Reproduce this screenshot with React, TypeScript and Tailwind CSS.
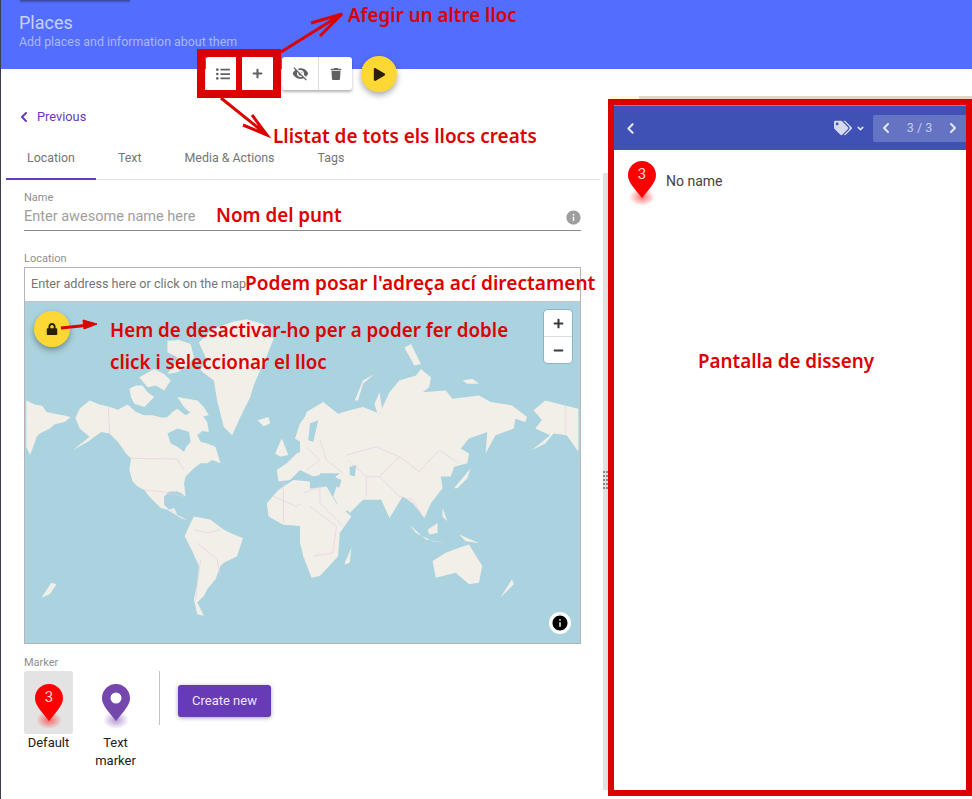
// Places editor screenshot with annotations
import { ChevronDown, ChevronLeft, ChevronRight } from 'lucide-react';
import { FaListUl, FaLock, FaMinus, FaPlay, FaPlus, FaTags, FaTrash } from 'react-icons/fa';
import { MdInfo, MdVisibilityOff } from 'react-icons/md';

const FONT = "font-['Roboto','Liberation_Sans',sans-serif]";
const NOTE = "absolute whitespace-nowrap font-['Noto_Sans',sans-serif] font-semibold text-[#dd0000] leading-none";

function Pin({ color, label, id }: { color: string; label?: string; id: string }) {
  return (
    <svg width="28" height="46" viewBox="0 0 28 46" className="block">
      <defs>
        <radialGradient id={id}>
          <stop offset="0%" stopColor={color} stopOpacity="0.55" />
          <stop offset="100%" stopColor={color} stopOpacity="0" />
        </radialGradient>
      </defs>
      <ellipse cx="14" cy="36" rx="13" ry="9" fill={`url(#${id})`} />
      <path d="M14 0C6.3 0 0 6.3 0 14c0 5 2.6 8.4 5.5 12.5L14 37l8.500-10.500C25.400 22.400 28 19 28 14 28 6.300 21.700 0 14 0z" fill={color} />
      {label ? (
        <text x="14" y="18" textAnchor="middle" fontSize="15" fill="#ffd6d6" fontFamily="Roboto">
          {label}
        </text>
      ) : (
        <circle cx="14" cy="14" r="5.500" fill="#fff" />
      )}
    </svg>
  );
}

// hand traced continents, coordinates are 3x page pixels
function WorldMap() {
  return (
    <svg viewBox="24 301 557 343" className="absolute inset-0 h-full w-full">
      <g transform="translate(20 300) scale(0.3333)" fill="#f2efe9" stroke="none">
        <path d="M14 300L40 312 62 316 75 335 100 340 125 345 148 350 130 365 100 372 85 385 55 400 45 410 35 440 25 465 14 440Z" />
        <path d="M162 352L175 325 205 300 235 312 262 318 290 328 320 312 345 335 370 345 395 345 425 352 440 350 455 335 470 325 495 345 520 330 545 345 560 365 565 395 545 392 530 405 540 425 560 430 585 440 600 490 575 480 560 490 540 490 520 505 495 530 490 550 492 565 495 590 482 580 470 575 445 575 430 590 430 615 445 630 460 625 470 645 500 662 480 655 455 640 440 630 420 625 400 605 385 590 370 570 350 560 335 545 325 510 330 475 315 460 305 445 290 425 265 400 240 395 220 410 200 425 155 450 180 430 205 410 175 385Z" />
        <path d="M440 400L470 385 490 390 505 395 510 425 497 440 490 455 470 440 450 430Z" fill="#aad3df" />
        <path d="M325 265L345 255 365 255 380 275 400 290 385 305 370 320 340 310 330 290Z" />
        <path d="M355 230L400 205 430 220 450 240 430 270 405 255 380 260Z" />
        <path d="M470 290L500 295 530 300 550 320 565 345 540 350 520 345 500 330 490 320Z" />
        <path d="M440 120L475 118 510 130 520 170 500 195 470 215 440 220 460 190 470 170 440 155Z" />
        <path d="M535 125L565 95 590 80 640 62 680 55 730 70 760 115 740 165 720 210 700 255 690 290 660 350 635 405 610 380 600 340 590 300 580 240 560 225 540 210 555 170Z" />
        <path d="M712 360L745 350 750 370 730 378Z" />
        <path d="M765 460L785 415 805 465 780 470Z" />
        <path d="M870 330L840 370 825 415 850 430 870 400Z" />
        <path d="M870 445L830 460 800 490 770 510 775 545 810 540 840 510 870 520Z" />
        <path d="M870 545L820 540 775 570 740 610 745 650 790 675 850 680 850 770 870 800Z" />
        <path d="M492 710L505 680 520 650 545 655 570 660 610 690 640 705 668 715 650 770 610 790 600 800 585 840 560 870 550 890 530 910 550 950 530 945 520 900 530 850 535 800 510 745Z" />
        <path d="M60 895L90 850 105 855 85 885Z" />
        <g fill="none" stroke="#e6cbe0" strokeWidth="2">
          <path d="M262 318L265 400M330 475L470 477 490 510M370 570L420 575 490 590M450 630L480 655" />
          <path d="M520 690L560 700 600 690M530 730L590 780 600 830M540 780L525 900M760 590L830 620 860 600M790 540L790 670" />
        </g>
      </g>
      <g transform="translate(300 300) scale(0.3333)" fill="#f2efe9" stroke="none">
        <path d="M0 390L20 335 70 305 115 340 150 330 190 320 240 340 270 275 300 240 350 225 365 205 395 230 390 260 370 275 440 270 460 295 540 285 575 305 640 315 685 350 680 365 650 355 645 385 590 405 560 460 565 395 510 415 485 445 510 460 505 490 465 500 455 530 425 530 430 565 395 610 375 655 340 610 310 590 270 655 245 600 190 600 150 640 110 590 125 540 80 520 40 530 0 510Z" />
        <path d="M0 570L80 560 110 610 155 650 120 700 115 770 60 830 35 835 10 770 0 730Z" />
        <path d="M110 560L190 600 130 640 100 590Z" />
        <path d="M400 785L440 760 480 745 510 735 550 800 540 850 510 855 470 820 410 835Z" />
        <path d="M135 790L155 745 150 790 135 795Z" />
        <path d="M465 565L515 505 505 535 475 565Z" />
        <path d="M330 675L380 720 440 730 400 725 350 700Z" />
        <path d="M385 690L415 670 415 700 390 705Z" />
        <path d="M480 705L540 730 500 725Z" />
        <path d="M430 625L445 665 430 650Z" />
        <path d="M605 895L640 840 645 855Z" />
        <path d="M165 300L190 240 225 220 190 250 175 300Z" />
        <path d="M705 330L740 300 800 315 840 325 840 455 805 405 765 400 740 430 700 450 755 405 710 385 730 360Z" />
        <path d="M315 140L335 130 365 190 345 195Z" />
        <path d="M225 310L240 275 248 330 235 345Z" />
        <path d="M490 240L520 235 540 250 505 250Z" />
        <path d="M150 500L170 495 165 530 150 525Z" fill="#aad3df" />
        <path d="M30 370L55 360 40 425 25 420Z" fill="#aad3df" />
        <path d="M60 520L120 520 95 540 60 535Z" fill="#aad3df" />
        <g fill="none" stroke="#e6cbe0" strokeWidth="2">
          <path d="M140 465L230 440 300 470 360 515 420 450 480 490M300 470L240 530 200 530 145 480" />
          <path d="M240 530L300 590 340 600 370 650M200 530L200 590M10 580L60 560 60 610 130 680M30 620L110 680 100 760 40 770" />
          <path d="M20 440L60 480 20 510M60 420L80 480 130 520M802 315L802 400" />
        </g>
      </g>
    </svg>
  );
}

export default function App() {
  return (
    <div className={`relative h-[799px] w-[972px] overflow-hidden border-l border-l-[#3d3d4d] bg-white ${FONT}`}>
      <header className="h-[69px] bg-[#536dfe] pl-[18px] pt-[13px]">
        <h1 className="text-[18px] leading-[20px] text-[#c7d1ff]">Places</h1>
        <p className="mt-[1px] text-[12.400px] leading-[15px] text-[#a9b8fd]">Add places and information about them</p>
      </header>
      <div className="absolute left-[19px] top-0 h-[1px] w-[110px] bg-[#3b4a9c] shadow-[0_1px_2px_rgba(0,0,0,0.4)]" />

      <div className="flex h-[730px]">
        <div className="w-[602px] shrink-0">
          <a className="mt-[38px] flex h-[20px] items-center pl-[15px] text-[12.800px] text-[#673ab7]">
            <ChevronLeft size={16} strokeWidth={3} />
            <span className="ml-[5px]">Previous</span>
          </a>
          <nav className="ml-[5px] mt-[11px] flex h-[42px] w-[594px] gap-px border-b border-[#e0e0e0] text-[12.400px] text-[#757575]">
            <div className="flex h-[42px] items-center border-b-2 border-[#673ab7] px-[21px] pt-px">Location</div>
            <div className="flex h-[41px] items-center px-[21px]">Text</div>
            <div className="flex h-[41px] items-center px-[21px]">Media &amp; Actions</div>
            <div className="flex h-[41px] items-center px-[21px]">Tags</div>
          </nav>

          <div className="ml-[23px] w-[557px]">
            <label className="mt-[11px] block text-[11px] leading-[13px] text-[#8f8f8f]">Name</label>
            <div className="flex h-[27px] items-center justify-between border-b border-[#8a8a8a] text-[14.500px] text-[#9e9e9e]">
              <span>Enter awesome name here</span>
              <MdInfo size={17} className="-mr-[1px] text-[#9e9e9e]" />
            </div>

            <label className="mt-[21px] block text-[11px] leading-[13px] text-[#8f8f8f]">Location</label>
            <div className="mt-[2px] border border-[#b5b5b5]">
              <div className="flex h-[33px] items-center bg-white pl-[6px] text-[12.650px] text-[#757575]">
                Enter address here or click on the map
              </div>
              <div className="relative h-[342px] overflow-hidden border-t border-[#c4c4c4] bg-[#aad3df]">
                <WorldMap />
                <button className="absolute left-[9px] top-[9px] flex h-[36px] w-[36px] items-center justify-center rounded-full bg-[#fdd835] shadow-[0_3px_6px_rgba(0,0,0,0.35)]">
                  <FaLock size={12} className="text-[#2a2008]" />
                </button>
                <div className="absolute right-[8px] top-[8px] flex w-[28px] flex-col rounded-[4px] bg-white shadow-[0_0_0_1px_rgba(120,160,175,0.6)]">
                  <div className="flex h-[27px] items-center justify-center border-b border-[#ddd]">
                    <FaPlus size={11} className="text-[#3a3a3a]" />
                  </div>
                  <div className="flex h-[26px] items-center justify-center">
                    <FaMinus size={11} className="text-[#3a3a3a]" />
                  </div>
                </div>
                <div className="absolute bottom-[9px] right-[9px] flex h-[22px] w-[22px] items-center justify-center rounded-full bg-white">
                  <MdInfo size={18} className="text-black" />
                </div>
              </div>
            </div>

            <label className="mt-[12px] block text-[11px] leading-[13px] text-[#8f8f8f]">Marker</label>
            <div className="mt-[2px] flex items-start">
              <div className="w-[49px] text-center text-[13px] leading-[18px] text-[#212121]">
                <div className="flex h-[63px] items-start justify-center rounded-[3px] bg-[#e3e3e3] pt-[13px]">
                  <Pin id="pin-default" color="#ff0000" label="3" />
                </div>
                <div>Default</div>
              </div>
              <div className="ml-[18px] w-[49px] text-center text-[13px] leading-[18px] text-[#212121]">
                <div className="flex h-[63px] items-start justify-center pt-[13px]">
                  <Pin id="pin-text" color="#7447ad" />
                </div>
                <div>Text marker</div>
              </div>
              <div className="ml-[19px] h-[54px] w-px bg-[#c4c4c4]" />
              <button className="ml-[18px] mt-[14px] h-[32px] w-[93px] rounded-[3px] bg-[#673ab7] text-[13px] text-[#ede7f6] shadow-[0_1px_4px_rgba(0,0,0,0.35)]">
                Create new
              </button>
            </div>
          </div>
        </div>

        <div className="relative mt-[104px] h-[617px] w-[5px] shrink-0 bg-[#e0e0e0]">
          <div className="absolute left-0 top-[298px] grid grid-cols-2 gap-x-px gap-y-[2px]">
            {Array.from({ length: 10 }).map((_, i) => (
              <span key={i} className="h-[2px] w-[2px] bg-[#8a8a8a]" />
            ))}
          </div>
        </div>

        <div className="mt-[30px] flex h-[697px] w-[364px] shrink-0 flex-col border-[6px] border-[#dd0000] bg-white">
          <div className="flex h-[45px] shrink-0 items-center justify-between border-t border-[#7986cb] bg-[#3f51b5] text-[#dfe3f5]">
            <ChevronLeft size={17} strokeWidth={3} className="ml-[8px]" />
            <div className="flex items-center">
              <FaTags size={18} className="text-[#d5daf0]" />
              <ChevronDown size={9} strokeWidth={4} className="ml-[4px]" />
              <div className="ml-[8px] flex h-[27px] w-[93px] items-center justify-between rounded-l-[2px] bg-[#6573c3] px-[5px] text-[12.500px] text-[#c5cae9]">
                <ChevronLeft size={16} strokeWidth={3} className="text-[#e4e7f6]" />
                <span>3 / 3</span>
                <ChevronRight size={16} strokeWidth={3} className="text-[#e4e7f6]" />
              </div>
            </div>
          </div>
          <div className="flex items-start pl-[14px] pt-[11px]">
            <Pin id="pin-list" color="#ff0000" label="3" />
            <span className="ml-[10px] mt-[11px] text-[14px] leading-[18px] text-[#424242]">No name</span>
          </div>
        </div>
      </div>

      {/* panell de darrere, només se'n veu la vora de dalt */}
      <div className="absolute left-[608px] top-[96px] h-[3px] w-[30px] bg-[#fff8dc]" />
      <div className="absolute left-[638px] top-[96px] h-[3px] w-[334px] bg-[#dfd6cc]" />

      {/* barra d'eines sobre la capçalera */}
      <div className="absolute left-[205px] top-[57px] flex h-[33px] w-[68px] rounded-[3px] bg-white text-[#616161] shadow-[0_2px_3px_rgba(0,0,0,0.3)]">
        <div className="flex w-1/2 items-center justify-center"><FaListUl size={14} /></div>
        <div className="flex w-1/2 items-center justify-center"><FaPlus size={11} /></div>
      </div>
      <div className="absolute left-[281px] top-[57px] flex h-[33px] w-[70px] rounded-[3px] bg-white text-[#616161] shadow-[0_2px_3px_rgba(0,0,0,0.3)]">
        <div className="flex w-[37px] items-center justify-center border-r border-[#ddd]"><MdVisibilityOff size={17} /></div>
        <div className="flex flex-1 items-center justify-center"><FaTrash size={12} /></div>
      </div>
      <button className="absolute left-[360px] top-[56px] flex h-[36px] w-[36px] items-center justify-center rounded-full bg-[#fdd835] shadow-[0_3px_6px_rgba(0,0,0,0.35)]">
        <FaPlay size={13} className="text-[#2a2008]" />
      </button>

      {/* anotacions */}
      <div className="absolute left-[196px] top-[49px] h-[49px] w-[84px] border-8 border-[#dd0000]" />
      <div className="absolute left-[235px] top-[50px] h-[47px] w-[6px] bg-[#dd0000]" />
      <svg className="absolute left-[-1px] top-0" width="972" height="799" fill="none" stroke="#dd0000" strokeWidth="3" pointerEvents="none">
        <path d="M281 52L342 14M311 23L342 14 320 36" />
        <path d="M221 98L267 135M243 125L267 135 252 115" />
        <path d="M61 328L90 325" />
        <path d="M83 320L97 324 84 329Z" fill="#dd0000" strokeWidth="1" />
      </svg>
      <span className={`${NOTE} left-[347px] top-[6px] text-[18.800px]`}>Afegir un altre lloc</span>
      <span className={`${NOTE} left-[272px] top-[127px] text-[18.900px]`}>Llistat de tots els llocs creats</span>
      <span className={`${NOTE} left-[215px] top-[206px] text-[18.800px]`}>Nom del punt</span>
      <span className={`${NOTE} left-[244px] top-[274px] text-[19.100px]`}>Podem posar l'adreça ací directament</span>
      <span className={`${NOTE} left-[109px] top-[321px] text-[18.800px]`}>Hem de desactivar-ho per a poder fer doble</span>
      <span className={`${NOTE} left-[109px] top-[353px] text-[18.800px]`}>click i seleccionar el lloc</span>
      <span className={`${NOTE} left-[697px] top-[352px] text-[18.800px]`}>Pantalla de disseny</span>
    </div>
  );
}
